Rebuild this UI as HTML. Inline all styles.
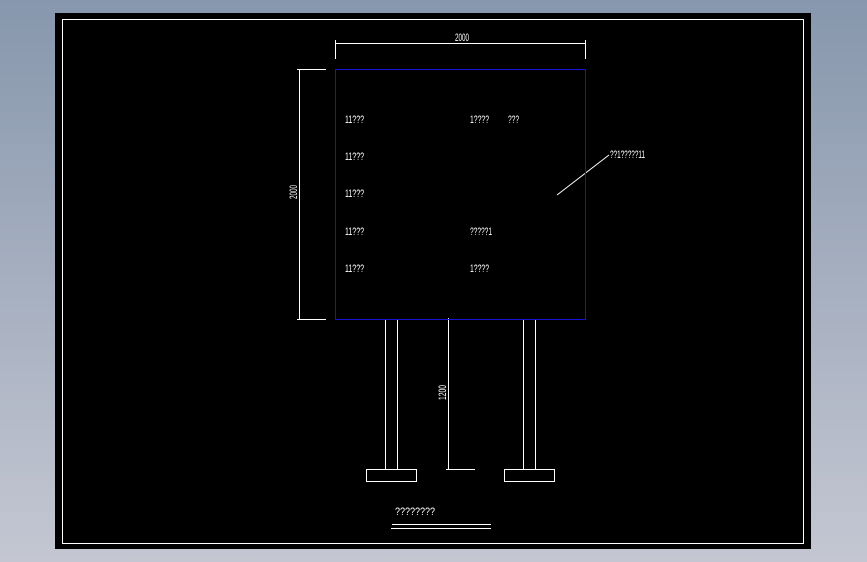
<!DOCTYPE html>
<html><head><meta charset="utf-8"><style>
html,body{margin:0;padding:0;width:867px;height:562px;overflow:hidden;background:linear-gradient(#8a9bb0,#c3c6d1);}
svg{display:block}
text{font-family:"Liberation Sans Narrow","Liberation Sans",sans-serif;fill:#fff;font-size:11px}
</style></head><body>
<svg width="867" height="562" viewBox="0 0 867 562">
<defs><linearGradient id="g" x1="0" y1="0" x2="0" y2="1"><stop offset="0" stop-color="#8797ad"/><stop offset="1" stop-color="#c4c7d2"/></linearGradient></defs>
<rect width="867" height="562" fill="url(#g)"/>
<rect x="55" y="13" width="756" height="536" fill="#000"/>
<rect x="62.5" y="19.5" width="741" height="524" fill="none" stroke="#fff" stroke-width="1"/>
<g stroke="#fff" stroke-width="1" fill="none">
<line x1="335.5" y1="43.5" x2="585.5" y2="43.5"/>
<line x1="335.5" y1="40" x2="335.5" y2="59"/>
<line x1="585.5" y1="40" x2="585.5" y2="59"/>
<line x1="297" y1="69.5" x2="326" y2="69.5"/>
<line x1="299.5" y1="69" x2="299.5" y2="320"/>
<line x1="297" y1="319.5" x2="326" y2="319.5"/>
<line x1="385.5" y1="320" x2="385.5" y2="469"/>
<line x1="397.5" y1="320" x2="397.5" y2="469"/>
<rect x="366.5" y="469.5" width="50" height="12"/>
<line x1="523.5" y1="320" x2="523.5" y2="469"/>
<line x1="535.5" y1="320" x2="535.5" y2="469"/>
<rect x="504.5" y="469.5" width="50" height="12"/>
<line x1="448.5" y1="318" x2="448.5" y2="470"/>
<line x1="446" y1="469.5" x2="475" y2="469.5"/>
<line x1="557" y1="195" x2="609" y2="155"/>
<line x1="392" y1="524.5" x2="491" y2="524.5"/>
<line x1="391" y1="528.5" x2="491" y2="528.5"/>
</g>
<rect x="335.5" y="69.5" width="250" height="250" fill="none" stroke="#1414d8" stroke-width="1"/>
<g lengthAdjust="spacingAndGlyphs">
<text x="455" y="41" font-size="9" textLength="14" lengthAdjust="spacingAndGlyphs">2000</text>
<text transform="translate(297,199) rotate(-90)" font-size="9" textLength="14" lengthAdjust="spacingAndGlyphs">2000</text>
<text transform="translate(446,400) rotate(-90)" font-size="9" textLength="15" lengthAdjust="spacingAndGlyphs">1200</text>
<text x="345" y="123" textLength="19" lengthAdjust="spacingAndGlyphs">11???</text>
<text x="470" y="123" textLength="19" lengthAdjust="spacingAndGlyphs">1????</text>
<text x="508" y="123" textLength="11" lengthAdjust="spacingAndGlyphs">???</text>
<text x="345" y="160" textLength="19" lengthAdjust="spacingAndGlyphs">11???</text>
<text x="345" y="197" textLength="19" lengthAdjust="spacingAndGlyphs">11???</text>
<text x="345" y="235" textLength="19" lengthAdjust="spacingAndGlyphs">11???</text>
<text x="470" y="235" textLength="22" lengthAdjust="spacingAndGlyphs">?????1</text>
<text x="345" y="272" textLength="19" lengthAdjust="spacingAndGlyphs">11???</text>
<text x="470" y="272" textLength="19" lengthAdjust="spacingAndGlyphs">1????</text>
<text x="610" y="158" textLength="35" lengthAdjust="spacingAndGlyphs">??1?????11</text>
<text x="395" y="515" textLength="40" lengthAdjust="spacingAndGlyphs">????????</text>
</g>
</svg>
</body></html>
